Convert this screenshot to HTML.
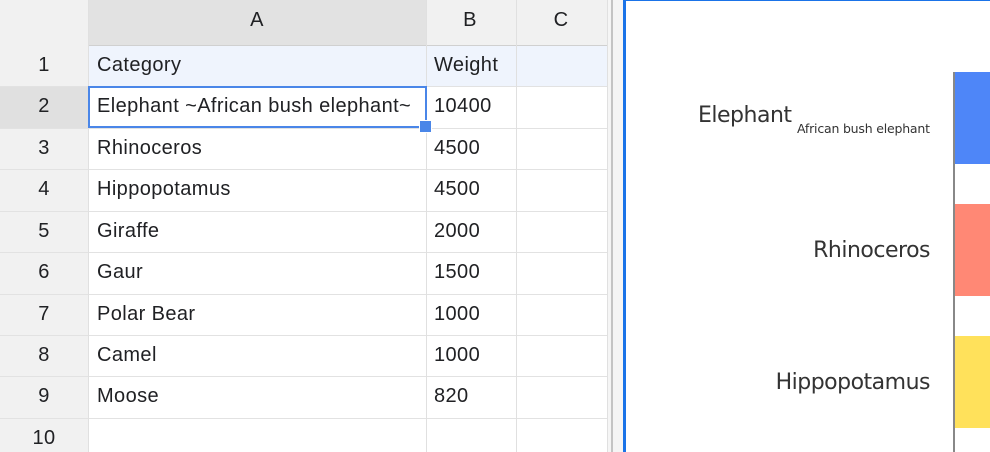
<!DOCTYPE html><html><head><style>
body{margin:0;width:990px;height:452px;overflow:hidden;background:#fff;font-family:"Liberation Sans",Arial,sans-serif;position:relative}
.a{position:absolute}
.t{position:absolute;font-size:20px;color:#202124;line-height:20px;letter-spacing:0.4px}
</style></head><body>
<div class="a" style="left:0;top:0;width:608px;height:45px;background:#f1f1f1;border-bottom:1px solid #d0d0d0"></div>
<div class="a" style="left:88px;top:0;width:338px;height:45px;background:#e2e2e2"></div>
<div class="a" style="left:0;top:45px;width:88px;height:407px;background:#f1f1f1;border-right:1px solid #d0d0d0"></div>
<div class="a" style="left:0;top:86px;width:88px;height:42px;background:#e0e0e0"></div>
<div class="a" style="left:89px;top:46px;width:519px;height:40px;background:#eff4fd"></div>
<div id="g"></div>
<script>
var h='';var ys=[45,86,128,169,211,252,294,335,376,418,460];
for(var i=1;i<10;i++)h+='<div class="a" style="left:0;top:'+ys[i]+'px;width:608px;height:1px;background:#e2e2e2"></div>';
[88,426,516,607].forEach(function(x){h+='<div class="a" style="left:'+x+'px;top:0;width:1px;height:452px;background:#e0e0e0"></div>'});
var cells=[["Category","Weight"],["Elephant ~African bush elephant~","10400"],["Rhinoceros","4500"],["Hippopotamus","4500"],["Giraffe","2000"],["Gaur","1500"],["Polar Bear","1000"],["Camel","1000"],["Moose","820"],["",""]];
for(var r=0;r<10;r++){var c=(ys[r]+ys[r+1])/2-11;
h+='<div class="t" style="left:0;width:88px;text-align:center;top:'+c+'px">'+(r+1)+'</div>';
h+='<div class="t" style="left:97px;top:'+c+'px">'+cells[r][0]+'</div>';
h+='<div class="t" style="left:434px;top:'+c+'px">'+cells[r][1]+'</div>';}
[["A",257],["B",470],["C",561]].forEach(function(a){h+='<div class="t" style="left:'+(a[1]-20)+'px;width:40px;text-align:center;top:10px">'+a[0]+'</div>'});
document.getElementById('g').innerHTML=h;
</script>
<div class="a" style="left:88px;top:86px;width:335px;height:38px;border:2px solid #4a86e8"></div>
<div class="a" style="left:419px;top:120px;width:11px;height:11px;background:#4a86e8;border:1px solid #fff"></div>
<div class="a" style="left:608px;top:0;width:15px;height:452px;background:#f5f5f5"></div>
<div class="a" style="left:611px;top:0;width:2px;height:452px;background:#c4c4c4"></div>
<div class="a" style="left:623px;top:0;width:3px;height:452px;background:#1a73e8"></div>
<div class="a" style="left:626px;top:0;width:364px;height:1px;background:#1a73e8"></div>
<div class="a" style="left:953px;top:72px;width:2px;height:380px;background:#888"></div>
<div class="a" style="left:955px;top:72px;width:35px;height:92px;background:#4e86f8"></div>
<div class="a" style="left:955px;top:204px;width:35px;height:92px;background:#ff8875"></div>
<div class="a" style="left:955px;top:336px;width:35px;height:92px;background:#ffe15b"></div>
<div class="a" style="left:698px;top:103px;font-size:22px;color:#333;font-family:'DejaVu Sans',sans-serif;letter-spacing:-0.5px">Elephant</div>
<div class="a" style="left:797px;top:121px;font-size:12.5px;color:#333;font-family:'DejaVu Sans',sans-serif;letter-spacing:-0.2px">African bush elephant</div>
<div class="a" style="right:60px;top:238px;font-size:22px;color:#333;font-family:'DejaVu Sans',sans-serif;letter-spacing:-0.5px">Rhinoceros</div>
<div class="a" style="right:60px;top:370px;font-size:22px;color:#333;font-family:'DejaVu Sans',sans-serif;letter-spacing:-0.5px">Hippopotamus</div>
</body></html>
